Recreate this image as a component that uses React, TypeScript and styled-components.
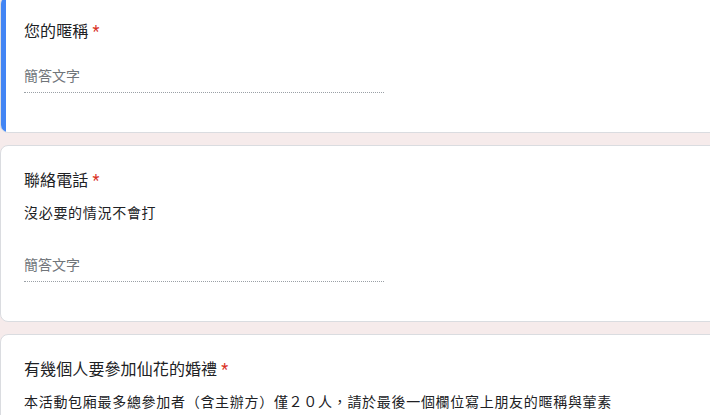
import styled, { createGlobalStyle } from "styled-components";

const GlobalStyle = createGlobalStyle`
  html, body {
    margin: 0;
    padding: 0;
    background: #f6ebeb;
    overflow: hidden;
  }
  body {
    font-family: Roboto, "Noto Sans CJK TC", Arial, sans-serif;
    color: #202124;
  }
`;

type Question = {
  title: string;
  description?: string;
  answer?: boolean;
  active?: boolean;
};

const questions: Question[] = [
  { title: "您的暱稱", answer: true, active: true },
  { title: "聯絡電話", description: "沒必要的情況不會打", answer: true },
  {
    title: "有幾個人要參加仙花的婚禮",
    description:
      "本活動包廂最多總參加者（含主辦方）僅２０人，請於最後一個欄位寫上朋友的暱稱與葷素",
  },
];

export default function App() {
  return (
    <>
      <GlobalStyle />
      <Page>
        {questions.map((q) => (
          <Card key={q.title} $active={q.active}>
            <Header $hasDescription={!!q.description}>
              <Title>
                {q.title}
                <Required>*</Required>
              </Title>
              {q.description && <Description>{q.description}</Description>}
            </Header>
            {q.answer && <ShortAnswer>簡答文字</ShortAnswer>}
          </Card>
        ))}
      </Page>
    </>
  );
}

const Page = styled.div`
  display: flex;
  flex-direction: column;
  gap: 12px;
  width: 770px;
  margin-top: -4px;
`;

const Card = styled.div<{ $active?: boolean }>`
  position: relative;
  display: flex;
  flex-direction: column;
  background: #ffffff;
  border: 1px solid #dadce0;
  border-radius: 8px;
  padding: 23px 23px 39px;
  overflow: hidden;

  &::before {
    content: "";
    display: ${(p) => (p.$active ? "block" : "none")};
    position: absolute;
    left: -1px;
    top: -1px;
    bottom: -1px;
    width: 6px;
    background: #4285f4;
  }
`;

const Header = styled.div<{ $hasDescription?: boolean }>`
  display: flex;
  flex-direction: column;
  gap: 10px;
  margin-bottom: ${(p) => (p.$hasDescription ? "32px" : "22px")};
`;

const Title = styled.div`
  font-size: 16px;
  line-height: 24px;
  letter-spacing: 0.1px;
`;

const Required = styled.span`
  color: #d93025;
  padding-left: 4px;
`;

const Description = styled.p`
  margin: 0;
  font-size: 14px;
  line-height: 20px;
  letter-spacing: 0.7px;
`;

const ShortAnswer = styled.div`
  width: 360px;
  font-size: 14px;
  line-height: 20px;
  color: #70757a;
  padding-bottom: 6px;
  border-bottom: 1px dotted #9aa0a6;
`;
